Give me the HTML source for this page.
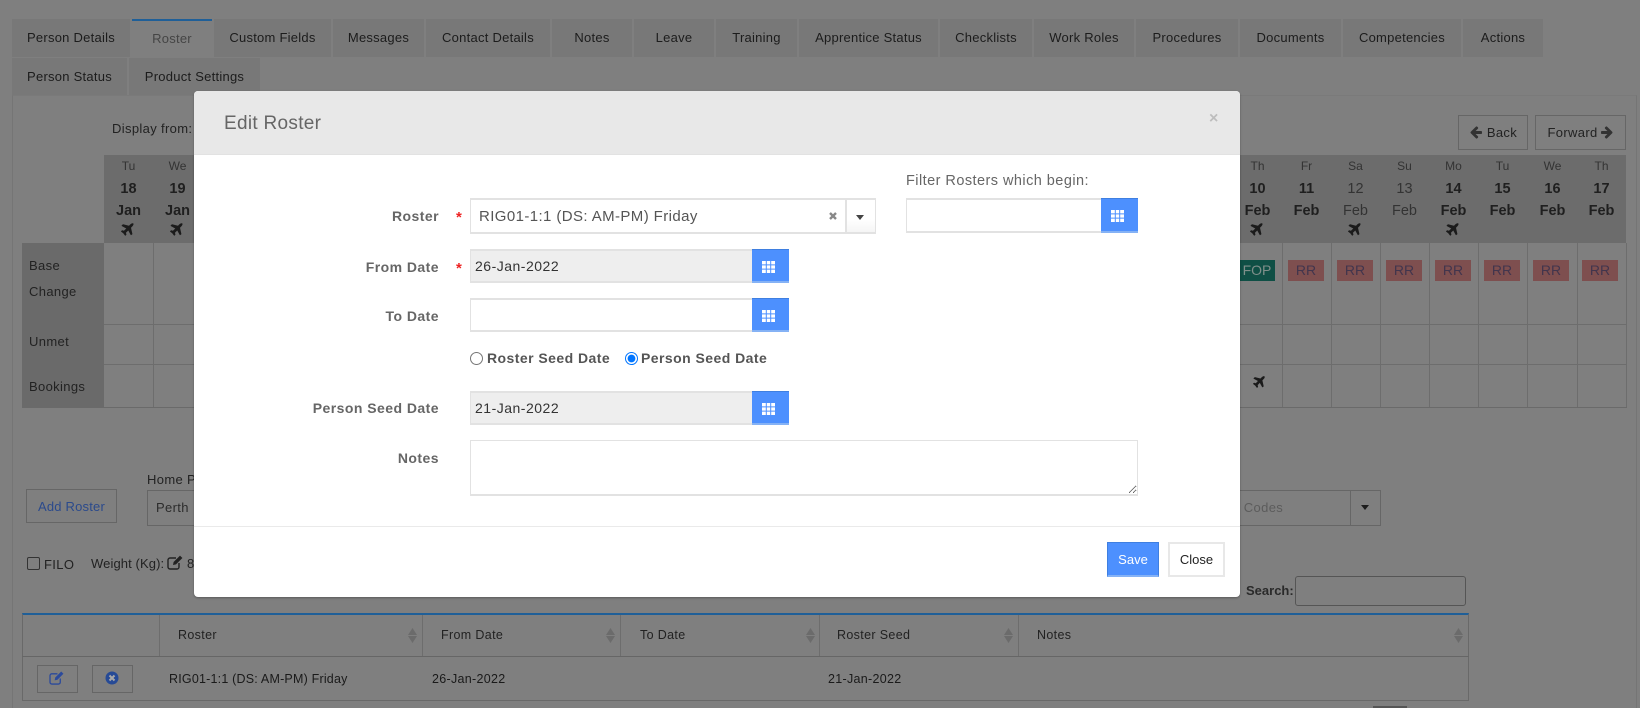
<!DOCTYPE html>
<html lang="en"><head><meta charset="utf-8"><title>Edit Roster</title>
<style>
html,body{margin:0;padding:0;width:1640px;height:708px;overflow:hidden;background:#7f7f7f}
body{position:relative;font-family:"Liberation Sans",Arial,sans-serif;font-size:13px;color:#222}
*{box-sizing:border-box}
.a,.t,.tab,.c,.btn,.lb,.in,.cal,.s{position:absolute}
.t{line-height:20px;height:20px;white-space:nowrap;letter-spacing:.35px}
.tab{background:#787878;text-align:center;color:#1c1c1c;font-size:13px;letter-spacing:.25px;height:38px;line-height:38px;top:19px}
.c{text-align:center;top:155px;width:49px;height:88px}
.c div{position:absolute;left:0;width:100%;line-height:20px}
.c .d{top:1px;font-size:12px;color:#333}
.c .n{top:24px;font-size:14.5px;font-weight:700;color:#1f1f1f}
.c .m{top:46px;font-size:14.5px;font-weight:700;color:#1f1f1f}
.c.w .n,.c.w .m{font-weight:400;color:#333}
.c svg{position:absolute;left:17px;top:67px}
.vl{position:absolute;top:243px;width:1px;height:164px;background:#6d6d6d}
.hl{position:absolute;height:1px;background:#6d6d6d}
.badge{position:absolute;top:260px;height:21px;line-height:21px;text-align:center;font-size:14px}
.rr{width:36px;background:#7e4f4f;color:#42354d}
.btn{border:1px solid #666;text-align:center;letter-spacing:.35px}
.sort{position:absolute;top:628px;width:9px;height:15px}
.lb{right:1201px;font-weight:700;color:#666;font-size:14px;line-height:20px;white-space:nowrap;letter-spacing:.45px}
.star{position:absolute;left:456px;color:#e22;font-size:15px;font-weight:700;line-height:20px}
.in{background:#fff;border:1px solid #e2e2e2;border-bottom-width:2px;border-top-width:2px;font-size:14px;line-height:30px;color:#333;padding-left:4px}
.in.dis{background:#eee}
.cal{background:#4d90fe;border-top:1px solid #3f7fe0;border-bottom:2px solid #85b2f5;width:37px}
.cal svg{position:absolute;left:10px;top:11px}
</style></head><body>

<div class="tab" style="left:12px;width:118px">Person Details</div>
<div class="tab" style="left:132px;width:80px;background:#7f7f7f;color:#454545;border-top:2px solid #1f5f98;line-height:36px">Roster</div>
<div class="tab" style="left:214px;width:117px">Custom Fields</div>
<div class="tab" style="left:333px;width:91px">Messages</div>
<div class="tab" style="left:426px;width:124px">Contact Details</div>
<div class="tab" style="left:552px;width:80px">Notes</div>
<div class="tab" style="left:634px;width:80px">Leave</div>
<div class="tab" style="left:716px;width:81px">Training</div>
<div class="tab" style="left:799px;width:139px">Apprentice Status</div>
<div class="tab" style="left:940px;width:92px">Checklists</div>
<div class="tab" style="left:1034px;width:100px">Work Roles</div>
<div class="tab" style="left:1136px;width:102px">Procedures</div>
<div class="tab" style="left:1240px;width:101px">Documents</div>
<div class="tab" style="left:1343px;width:118px">Competencies</div>
<div class="tab" style="left:1463px;width:80px">Actions</div>
<div class="tab" style="left:12px;width:115px;top:58px;height:37px">Person Status</div>
<div class="tab" style="left:129px;width:131px;top:58px;height:37px">Product Settings</div>
<div class="a" style="left:12px;top:95px;width:1625px;height:613px;border-left:1px solid #757575;border-right:1px solid #757575;border-top:1px solid #7a7a7a"></div>

<div class="t" style="left:112px;top:119px;color:#222">Display from:</div>
<div class="btn" style="left:1458px;top:115px;width:70px;height:35px;line-height:33px;color:#222"><svg width="14" height="14" viewBox="0 0 1792 1792" style="vertical-align:-2px"><path fill="#333" d="M1664 896v128q0 53-32.5 90.5t-84.5 37.5h-704l293 294q38 36 38 90t-38 90l-75 76q-37 37-90 37-52 0-91-37l-651-652q-37-37-37-90 0-52 37-91l651-650q38-38 91-38 52 0 90 38l75 74q38 38 38 91t-38 91l-293 293h704q52 0 84.5 37.5t32.5 90.5z"/></svg> Back</div>
<div class="btn" style="left:1535px;top:115px;width:91px;height:35px;line-height:33px;color:#222">Forward <svg width="14" height="14" viewBox="0 0 1792 1792" style="vertical-align:-2px;margin-left:-2px"><path transform="matrix(-1 0 0 1 1792 0)" fill="#333" d="M1664 896v128q0 53-32.5 90.5t-84.5 37.5h-704l293 294q38 36 38 90t-38 90l-75 76q-37 37-90 37-52 0-91-37l-651-652q-37-37-37-90 0-52 37-91l651-650q38-38 91-38 52 0 90 38l75 74q38 38 38 91t-38 91l-293 293h704q52 0 84.5 37.5t32.5 90.5z"/></svg></div>

<!-- calendar -->
<svg width="0" height="0" style="position:absolute"><defs><symbol id="pl" viewBox="0 0 1792 1792"><path d="M1376 160q44 52 12 148t-108 172l-161 161 160 696q5 19-12 33l-128 96q-7 6-19 6-4 0-7-1-15-3-21-16l-279-508-259 259 53 194q5 17-8 31l-96 96q-9 9-23 9h-2q-15-2-24-13l-189-252-252-189q-11-7-13-23-1-13 9-25l96-97q9-9 23-9 6 0 8 1l194 53 259-259-508-279q-14-8-17-24-2-16 9-27l128-128q14-13 30-8l665 159 160-160q76-76 172-108t148 12z" fill="#1b1b1b"/></symbol></defs></svg>
<div class="a" style="left:104px;top:155px;width:1522px;height:88px;background:#6c6c6c"></div>
<div class="a" style="left:22px;top:243px;width:82px;height:164px;background:#6a6a6a"></div>
<div class="t" style="left:29px;top:256px;color:#222">Base</div>
<div class="t" style="left:29px;top:282px;color:#222">Change</div>
<div class="t" style="left:29px;top:332px;color:#222">Unmet</div>
<div class="t" style="left:29px;top:377px;color:#222">Bookings</div>

<div class="c" style="left:104px"><div class="d">Tu</div><div class="n">18</div><div class="m">Jan</div><svg width="16" height="16"><use href="#pl"/></svg></div>
<div class="c" style="left:153px"><div class="d">We</div><div class="n">19</div><div class="m">Jan</div><svg width="16" height="16"><use href="#pl"/></svg></div>
<div class="c" style="left:1233px"><div class="d">Th</div><div class="n">10</div><div class="m">Feb</div><svg width="16" height="16"><use href="#pl"/></svg></div>
<div class="c" style="left:1282px"><div class="d">Fr</div><div class="n">11</div><div class="m">Feb</div></div>
<div class="c w" style="left:1331px"><div class="d">Sa</div><div class="n">12</div><div class="m">Feb</div><svg width="16" height="16"><use href="#pl"/></svg></div>
<div class="c w" style="left:1380px"><div class="d">Su</div><div class="n">13</div><div class="m">Feb</div></div>
<div class="c" style="left:1429px"><div class="d">Mo</div><div class="n">14</div><div class="m">Feb</div><svg width="16" height="16"><use href="#pl"/></svg></div>
<div class="c" style="left:1478px"><div class="d">Tu</div><div class="n">15</div><div class="m">Feb</div></div>
<div class="c" style="left:1528px;width:49px"><div class="d">We</div><div class="n">16</div><div class="m">Feb</div></div>
<div class="c" style="left:1577px"><div class="d">Th</div><div class="n">17</div><div class="m">Feb</div></div>

<div class="vl" style="left:153px"></div>
<div class="vl" style="left:1282px"></div><div class="vl" style="left:1331px"></div><div class="vl" style="left:1380px"></div><div class="vl" style="left:1429px"></div><div class="vl" style="left:1478px"></div><div class="vl" style="left:1527px"></div><div class="vl" style="left:1577px"></div><div class="vl" style="left:1626px"></div>
<div class="hl" style="left:104px;width:1522px;top:324px"></div>
<div class="hl" style="left:104px;width:1522px;top:364px"></div>
<div class="hl" style="left:22px;width:1605px;top:407px;background:#6a6a6a"></div>

<div class="badge" style="left:1239px;width:36px;background:#0f4f45;color:#7f8f8a">FOP</div>
<div class="badge rr" style="left:1288px">RR</div>
<div class="badge rr" style="left:1337px">RR</div>
<div class="badge rr" style="left:1386px">RR</div>
<div class="badge rr" style="left:1435px">RR</div>
<div class="badge rr" style="left:1484px">RR</div>
<div class="badge rr" style="left:1533px">RR</div>
<div class="badge rr" style="left:1582px">RR</div>
<svg class="s" style="left:1253px;top:375px" width="15" height="15"><use href="#pl"/></svg>

<!-- below calendar -->
<div class="btn" style="left:26px;top:489px;width:91px;height:34px;line-height:33px;color:#2b4a8c;letter-spacing:.2px">Add Roster</div>
<div class="t" style="left:147px;top:470px">Home Port</div>
<div class="a" style="left:147px;top:490px;width:100px;height:36px;border:1px solid #666"></div>
<div class="t" style="left:156px;top:498px;color:#2c2c2c">Perth</div>
<div class="a" style="left:1200px;top:490px;width:181px;height:36px;border:1px solid #666"></div>
<div class="a" style="left:1350px;top:490px;width:1px;height:36px;background:#666"></div>
<div class="t" style="left:1220px;top:498px;color:#5c5c5c">Act Codes</div>
<div class="a" style="left:1361px;top:505px;border-left:4.5px solid transparent;border-right:4.5px solid transparent;border-top:5px solid #1d1d1d"></div>
<div class="a" style="left:27px;top:557px;width:13px;height:13px;border:1px solid #333;border-radius:2px"></div>
<div class="t" style="left:44px;top:555px;color:#222">FILO</div>
<div class="t" style="left:91px;top:554px;color:#222;letter-spacing:.1px">Weight (Kg):</div>
<svg class="s" style="left:167px;top:555px" width="17" height="15" viewBox="0 0 17 15"><path d="M12 8v4a2 2 0 0 1-2 2H3a2 2 0 0 1-2-2V5a2 2 0 0 1 2-2h6" fill="none" stroke="#222" stroke-width="1.4"/><path d="M6 10l.6-3L13 .6 15.400 3 9 9.400z" fill="#222"/></svg>
<div class="t" style="left:187px;top:554px;color:#222">8</div>

<div class="t" style="left:1246px;top:581px;color:#222;font-weight:700;color:#2a2a2a;letter-spacing:0">Search:</div>
<div class="a" style="left:1295px;top:576px;width:171px;height:30px;border:1px solid #555;border-radius:3px"></div>

<!-- table -->
<div class="a" style="left:22px;top:613px;width:1447px;height:88px;border:1px solid #696969;border-top:2px solid #1f5f98"></div>
<div class="hl" style="left:22px;width:1447px;top:656px;background:#666"></div>
<div class="a" style="left:159px;top:615px;width:1px;height:41px;background:#6d6d6d"></div>
<div class="a" style="left:422px;top:615px;width:1px;height:41px;background:#6d6d6d"></div>
<div class="a" style="left:620px;top:615px;width:1px;height:41px;background:#6d6d6d"></div>
<div class="a" style="left:819px;top:615px;width:1px;height:41px;background:#6d6d6d"></div>
<div class="a" style="left:1018px;top:615px;width:1px;height:41px;background:#6d6d6d"></div>
<div class="t" style="left:178px;top:625px;font-size:12.500px;color:#222">Roster</div>
<div class="t" style="left:441px;top:625px;font-size:12.500px;color:#222">From Date</div>
<div class="t" style="left:640px;top:625px;font-size:12.500px;color:#222">To Date</div>
<div class="t" style="left:837px;top:625px;font-size:12.500px;color:#222">Roster Seed</div>
<div class="t" style="left:1037px;top:625px;font-size:12.500px;color:#222">Notes</div>
<svg class="sort" style="left:408px" viewBox="0 0 9 15"><path d="M4.500 0L9 7H0zM0 8h9l-4.500 7z" fill="#6b6b6b"/></svg>
<svg class="sort" style="left:606px" viewBox="0 0 9 15"><path d="M4.500 0L9 7H0zM0 8h9l-4.500 7z" fill="#6b6b6b"/></svg>
<svg class="sort" style="left:806px" viewBox="0 0 9 15"><path d="M4.500 0L9 7H0zM0 8h9l-4.500 7z" fill="#6b6b6b"/></svg>
<svg class="sort" style="left:1004px" viewBox="0 0 9 15"><path d="M4.500 0L9 7H0zM0 8h9l-4.500 7z" fill="#6b6b6b"/></svg>
<svg class="sort" style="left:1454px" viewBox="0 0 9 15"><path d="M4.500 0L9 7H0zM0 8h9l-4.500 7z" fill="#6b6b6b"/></svg>
<div class="btn" style="left:37px;top:665px;width:41px;height:28px"></div>
<svg class="s" style="left:49px;top:671px" width="16" height="14" viewBox="0 0 17 15"><path d="M12 8v4a2 2 0 0 1-2 2H3a2 2 0 0 1-2-2V5a2 2 0 0 1 2-2h6" fill="none" stroke="#2b4a9c" stroke-width="1.400"/><path d="M6 10l.6-3L13 .6 15.400 3 9 9.400z" fill="#2b4a9c"/></svg>
<div class="btn" style="left:92px;top:665px;width:41px;height:28px"></div>
<svg class="s" style="left:105px;top:671px" width="14" height="14" viewBox="0 0 14 14"><circle cx="7" cy="7" r="6.500" fill="#264a96"/><path d="M4.500 4.500l5 5M9.500 4.500l-5 5" stroke="#a8a8a8" stroke-width="2"/></svg>
<div class="t" style="left:169px;top:669px;font-size:12.500px;color:#1a1a1a;letter-spacing:.2px">RIG01-1:1 (DS: AM-PM) Friday</div>
<div class="t" style="left:432px;top:669px;font-size:12.500px;color:#1a1a1a;letter-spacing:.3px">26-Jan-2022</div>
<div class="t" style="left:828px;top:669px;font-size:12.500px;color:#1a1a1a;letter-spacing:.3px">21-Jan-2022</div>
<div class="a" style="left:1373px;top:706px;width:34px;height:2px;background:#555"></div>

<!-- modal -->
<div class="a" style="left:194px;top:91px;width:1046px;height:506px;background:#fff;border-radius:4px;overflow:hidden;box-shadow:0 1px 2px rgba(0,0,0,.3)">
 <div class="a" style="left:0;top:0;width:1046px;height:64px;background:#e8e8e8;border-bottom:1px solid #e2e2e2"></div>
 <div class="a" style="left:0;top:435px;width:1046px;height:1px;background:#eaeaea"></div>
</div>
<div class="t" style="left:224px;top:112px;margin-top:2px;font-size:19px;color:#666;letter-spacing:.3px">Edit Roster</div>
<div class="t" style="left:1209px;top:109px;font-size:16px;color:#bdbdbd;font-weight:700">×</div>

<div class="lb" style="top:206px">Roster</div>
<div class="star" style="top:208px">*</div>
<div class="in" style="left:470px;top:198px;width:376px;height:36px;padding-left:8px;font-size:15px;line-height:34px;color:#555;letter-spacing:.4px">RIG01-1:1 (DS: AM-PM) Friday</div>
<div class="a" style="left:845px;top:198px;width:31px;height:36px;background:linear-gradient(#fff 60%,#f5f5f5);border:1px solid #e2e2e2;border-width:2px 1px 2px 2px"></div>
<svg class="s" style="left:829px;top:212px" width="8" height="8" viewBox="0 0 8 8"><path d="M1 1l6 6M7 1L1 7" stroke="#888" stroke-width="2.400"/></svg>
<div class="a" style="left:856px;top:215px;border-left:4.5px solid transparent;border-right:4.5px solid transparent;border-top:5px solid #444"></div>

<div class="t" style="left:906px;top:171px;font-size:14.500px;color:#666;letter-spacing:.45px">Filter Rosters which begin:</div>
<div class="in" style="left:906px;top:198px;width:196px;height:35px"></div>
<div class="cal" style="left:1101px;top:198px;height:35px"><svg width="13" height="12"><path d="M0 0h13v12H0z" fill="#fff"/><path d="M4.300 0v12M8.700 0v12M0 3.900h13M0 8.100h13" stroke="#4d90fe" stroke-width="1"/></svg></div>

<div class="lb" style="top:257px">From Date</div>
<div class="star" style="top:259px">*</div>
<div class="in dis" style="left:470px;top:249px;width:283px;height:34px;letter-spacing:.5px;color:#333">26-Jan-2022</div>
<div class="cal" style="left:752px;top:249px;height:34px"><svg width="13" height="12"><path d="M0 0h13v12H0z" fill="#fff"/><path d="M4.300 0v12M8.700 0v12M0 3.900h13M0 8.100h13" stroke="#4d90fe" stroke-width="1"/></svg></div>

<div class="lb" style="top:306px">To Date</div>
<div class="in" style="left:470px;top:298px;width:283px;height:34px"></div>
<div class="cal" style="left:752px;top:298px;height:34px"><svg width="13" height="12"><path d="M0 0h13v12H0z" fill="#fff"/><path d="M4.300 0v12M8.700 0v12M0 3.900h13M0 8.100h13" stroke="#4d90fe" stroke-width="1"/></svg></div>

<input type="radio" name="r" class="a" style="left:470px;top:352px;margin:0;width:13px;height:13px">
<div class="t" style="left:487px;top:348px;font-size:14px;color:#555;font-weight:700;letter-spacing:.45px">Roster Seed Date</div>
<input type="radio" name="r" checked class="a" style="left:625px;top:352px;margin:0;width:13px;height:13px">
<div class="t" style="left:641px;top:348px;font-size:14px;color:#555;font-weight:700;letter-spacing:.45px">Person Seed Date</div>

<div class="lb" style="top:398px">Person Seed Date</div>
<div class="in dis" style="left:470px;top:391px;width:283px;height:34px;letter-spacing:.5px;color:#333">21-Jan-2022</div>
<div class="cal" style="left:752px;top:391px;height:34px"><svg width="13" height="12"><path d="M0 0h13v12H0z" fill="#fff"/><path d="M4.300 0v12M8.700 0v12M0 3.900h13M0 8.100h13" stroke="#4d90fe" stroke-width="1"/></svg></div>

<div class="lb" style="top:448px">Notes</div>
<textarea class="a" style="left:470px;top:440px;width:668px;height:56px;margin:0;padding:0;border:1px solid #e2e2e2;border-bottom-width:2px;background:#fff;outline:0"></textarea>

<div class="a" style="left:1107px;top:542px;width:52px;height:35px;background:#4d90fe;border:1px solid #3f7fe0;border-bottom:2px solid #85b2f5;color:#fff;text-align:center;line-height:33px">Save</div>
<div class="a" style="left:1168px;top:542px;width:57px;height:35px;background:#fff;border:2px solid #e8e8e8;color:#222;text-align:center;line-height:31px">Close</div>

</body></html>
